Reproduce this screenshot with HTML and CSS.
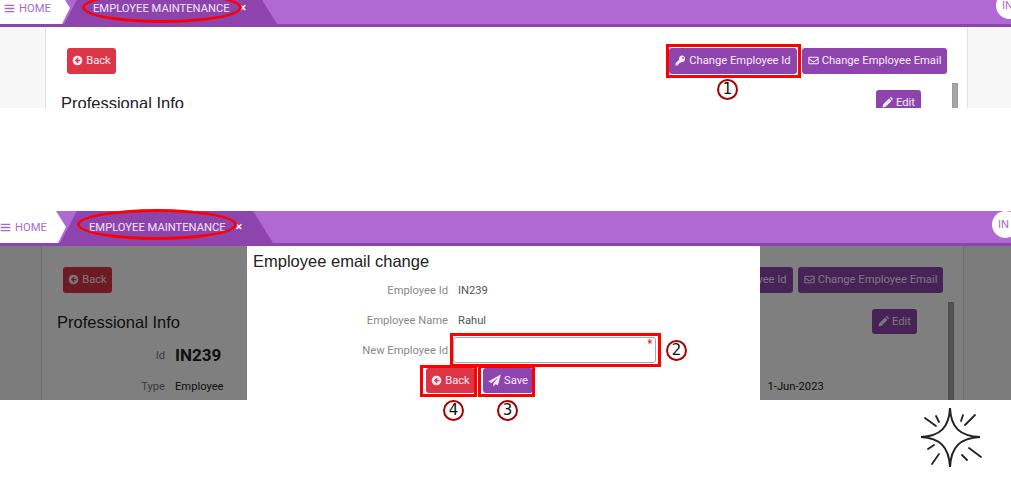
FILE: index.html
```html
<!DOCTYPE html>
<html lang="en">
<head>
    <meta charset="UTF-8">
    <title>Employee Maintenance</title>
    <link rel="stylesheet" href="styles.css">
</head>
<body>
    <svg class="defs" width="0" height="0">
        <symbol id="i-bars" viewBox="0 0 16 16"><path d="M1 2.5h14v2H1zM1 7h14v2H1zM1 11.5h14v2H1z"/></symbol>
        <symbol id="i-back" viewBox="0 0 16 16"><path fill-rule="evenodd" d="M8 1a7 7 0 1 0 0 14A7 7 0 0 0 8 1zM8.4 3.8l1.3 1.3-1.9 1.9H12.2v2H7.8l1.9 1.9-1.3 1.3L4.2 8z"/></symbol>
        <symbol id="i-key" viewBox="0 0 16 16"><path fill-rule="evenodd" d="M10.5.8a4.7 4.7 0 0 0-4.5 6L.8 12v3.2h3.4v-1.8H6v-1.8h1.8l1.4-1.4a4.7 4.7 0 1 0 1.3-9.4zM11.8 3a1.3 1.3 0 1 1 0 2.6 1.3 1.3 0 0 1 0-2.6z"/></symbol>
        <symbol id="i-mail" viewBox="0 0 16 16"><path fill-rule="evenodd" d="M2 2.5h12A1.5 1.5 0 0 1 15.500 4v8a1.500 1.500 0 0 1-1.500 1.500H2A1.500 1.500 0 0 1 .5 12V4A1.500 1.500 0 0 1 2 2.500zM2 4v1.200l6 4.300 6-4.300V4zM14 7l-6 4.300L2 7v5h12z"/></symbol>
        <symbol id="i-edit" viewBox="0 0 16 16"><path d="M.8 15.200l1-4.500 8.500-8.500 3.500 3.500-8.500 8.500zM11.300 1.200l1-.8c.4-.3.9-.3 1.300 0l2 2c.3.4.3.9 0 1.300l-.8 1z"/></symbol>
        <symbol id="i-send" viewBox="0 0 16 16"><path d="M15.700.5L.3 9.300l4.200 1.700 8.500-7.300-6.600 8.200v3.600l2.500-3 3.300 1.400z"/></symbol>
    </svg>

    <div class="canvas">
        <section class="shot shot-top">
            <div class="page">
                <nav class="nav">
                    <div class="tab-home"><svg class="icon"><use href="#i-bars"/></svg> HOME</div>
                    <div class="tab-active">EMPLOYEE MAINTENANCE <span class="tab-close">&#10005;</span></div>
                    <div class="avatar">IN</div>
                </nav>
                <main class="main">
                    <div class="card">
                        <div class="actions">
                            <button class="btn btn-red btn-back"><svg class="icon"><use href="#i-back"/></svg> Back</button>
                            <div class="actions-right">
                                <button class="btn btn-purple btn-id"><svg class="icon"><use href="#i-key"/></svg> Change Employee Id</button>
                                <button class="btn btn-purple btn-email"><svg class="icon"><use href="#i-mail"/></svg> Change Employee Email</button>
                            </div>
                        </div>
                        <div class="info-head">
                            <h2>Professional Info</h2>
                            <button class="btn btn-purple btn-edit"><svg class="icon"><use href="#i-edit"/></svg> Edit</button>
                        </div>
                        <div class="thumb"></div>
                    </div>
                </main>
            </div>
        </section>

        <section class="shot shot-bottom">
            <div class="page">
                <nav class="nav">
                    <div class="tab-home"><svg class="icon"><use href="#i-bars"/></svg> HOME</div>
                    <div class="tab-active">EMPLOYEE MAINTENANCE <span class="tab-close">&#10005;</span></div>
                    <div class="avatar">IN</div>
                </nav>
                <main class="main">
                    <div class="card">
                        <div class="actions">
                            <button class="btn btn-red btn-back"><svg class="icon"><use href="#i-back"/></svg> Back</button>
                            <div class="actions-right">
                                <button class="btn btn-purple btn-id"><svg class="icon"><use href="#i-key"/></svg> Change Employee Id</button>
                                <button class="btn btn-purple btn-email"><svg class="icon"><use href="#i-mail"/></svg> Change Employee Email</button>
                            </div>
                        </div>
                        <div class="info-head">
                            <h2>Professional Info</h2>
                            <button class="btn btn-purple btn-edit"><svg class="icon"><use href="#i-edit"/></svg> Edit</button>
                        </div>
                        <div class="info-id"><span class="info-label">Id</span><strong>IN239</strong></div>
                        <div class="info-type"><span class="info-label">Type</span><span>Employee</span><span class="info-date">1-Jun-2023</span></div>
                        <div class="thumb"></div>
                    </div>
                    <div class="dim"></div>
                    <div class="modal">
                        <h3>Employee email change</h3>
                        <div class="form-row"><label>Employee Id</label><span class="form-value">IN239</span></div>
                        <div class="form-row"><label>Employee Name</label><span class="form-value">Rahul</span></div>
                        <div class="form-row"><label>New Employee Id</label><div class="input"><span class="required">*</span></div></div>
                        <div class="modal-btns">
                            <button class="btn btn-red btn-back"><svg class="icon"><use href="#i-back"/></svg> Back</button>
                            <button class="btn btn-purple btn-save"><svg class="icon"><use href="#i-send"/></svg> Save</button>
                        </div>
                    </div>
                </main>
            </div>
        </section>

        <!-- annotations drawn on top of the screenshots -->
        <div class="ring ring-a"></div>
        <div class="ring ring-b"></div>
        <div class="box box-id"></div>
        <div class="box box-input"></div>
        <div class="box box-back"></div>
        <div class="box box-save"></div>
        <div class="num num-1">1</div>
        <div class="num num-2">2</div>
        <div class="num num-3">3</div>
        <div class="num num-4">4</div>

        <svg class="sparkle" viewBox="0 0 100 83" width="100" height="83">
            <path class="sparkle-star" d="M50 13C51 33 60 41 80 42C60 43 51 52 50 72C49 52 40 43 21 42C40 41 49 33 50 13Z"/>
            <path class="sparkle-ticks" d="M25 23L36 31M36 21L39 27M61 26L63 20M65 30L75 20M69 53L81 62M62 60L67 65M28 54L34 50M32 69L39 59"/>
        </svg>
    </div>
</body>
</html>
```

FILE: styles.css
```css
html, body {
    margin: 0;
    background-color: #fff;
}

.defs {
    position: absolute;
}

.canvas {
    position: relative;
    width: 1011px;
    height: 478px;
    overflow: hidden;
    font-family: 'Roboto', sans-serif;
    font-size: 11.2px;
}

.shot {
    overflow: hidden;
}

.shot-top {
    height: 108px;
    margin-bottom: 103px;
}

.shot-top .page {
    margin-top: -8px;
}

.shot-bottom {
    height: 189px;
}

.shot-bottom .page {
    margin-left: -4px;
}

.page {
    width: 1015px;
}

/* nav */
.nav {
    display: flex;
    height: 32px;
    background-color: #b068d3;
    border-bottom: 3px solid #8e44ad;
}

.tab-home {
    width: 70px;
    padding-left: 4px;
    box-sizing: border-box;
    display: flex;
    align-items: center;
    gap: 4px;
    background-color: #fff;
    color: #a66bc6;
    clip-path: polygon(0 0, 60px 0, 70px 50%, 62px 100%, 0 100%);
}

.tab-active {
    width: 213px;
    margin-left: -6px;
    padding-left: 29px;
    box-sizing: border-box;
    display: flex;
    align-items: center;
    gap: 9px;
    background-color: #8e44ad;
    color: #f1e4f7;
    white-space: nowrap;
    clip-path: polygon(0 100%, 17px 0, 193px 0, 213px 100%);
}

.tab-close {
    font-size: 9px;
    font-weight: bold;
    color: #fff;
}

.avatar {
    width: 27px;
    height: 27px;
    margin-left: auto;
    margin-right: -8px;
    padding-left: 6px;
    box-sizing: border-box;
    line-height: 27px;
    border-radius: 50%;
    background-color: #fff;
    color: #a66bc6;
}

/* content */
.main {
    position: relative;
    height: 160px;
    background-color: #f7f7f7;
    padding: 0 47px 0 45px;
}

.card {
    position: relative;
    height: 100%;
    padding: 21px 20px 0 21px;
    box-sizing: border-box;
    background-color: #fff;
    border-left: 1px solid #dee2e6;
    border-right: 1px solid #dee2e6;
    color: #333;
}

.actions {
    display: flex;
    justify-content: space-between;
}

.actions-right {
    display: flex;
    gap: 5px;
}

.btn {
    height: 26px;
    padding: 0 0 1px;
    display: inline-flex;
    align-items: center;
    justify-content: center;
    gap: 3px;
    border: 1px solid transparent;
    border-radius: 3px;
    color: #f6ecfa;
    font-family: inherit;
    font-size: 11.2px;
    white-space: nowrap;
}

.btn-red {
    background-color: #dc3545;
}

.btn-purple {
    background-color: #8e44ad;
}

.btn-back {
    width: 49px;
}

.btn-id {
    width: 128px;
}

.btn-email {
    width: 145px;
}

.btn-edit {
    width: 45px;
    height: 25px;
}

.btn-save {
    width: 50px;
}

.icon {
    width: 11px;
    height: 11px;
    fill: currentColor;
    flex: none;
}

.btn-save .icon {
    width: 13px;
    height: 13px;
}

.info-head {
    display: flex;
    justify-content: space-between;
    align-items: flex-start;
    height: 24px;
    margin: 16px 26px 0 -6px;
}

.info-head h2 {
    margin: 0;
    padding-top: 4px;
    font-family: 'Liberation Sans', sans-serif;
    font-size: 16.500px;
    font-weight: normal;
    color: #222;
}

.info-id, .info-type {
    display: flex;
    align-items: center;
    margin-left: -21px;
}

.info-id {
    height: 32px;
    margin-top: 6px;
    font-size: 17px;
}

.info-id strong {
    color: #222;
}

.info-type {
    margin-top: 9px;
    color: #222;
}

.info-label {
    width: 123px;
    margin-right: 10px;
    text-align: right;
    font-size: 11.2px;
    color: #777;
}

.info-date {
    margin-left: 544px;
}

.thumb {
    position: absolute;
    top: 56px;
    left: 906px;
    width: 6px;
    height: 110px;
    background-color: #a6a6a6;
    border: 1px solid #999;
    box-sizing: border-box;
}

/* modal */
.dim {
    position: absolute;
    inset: 0;
    background-color: rgba(0, 0, 0, 0.5);
}

.modal {
    position: absolute;
    top: 0;
    bottom: 0;
    left: 251px;
    width: 513px;
    padding-left: 6px;
    box-sizing: border-box;
    background-color: #fff;
}

.modal h3 {
    margin: 0;
    height: 29px;
    line-height: 30px;
    font-family: 'Liberation Sans', sans-serif;
    font-size: 16.500px;
    font-weight: normal;
    color: #222;
}

.form-row {
    display: flex;
    align-items: center;
    height: 30px;
}

.form-row label {
    width: 195px;
    text-align: right;
    color: #888;
}

.form-value {
    margin-left: 10px;
    color: #555;
}

.input {
    position: relative;
    width: 203px;
    height: 26px;
    margin-left: 5px;
    box-sizing: border-box;
    border: 1px solid #aaa;
    border-radius: 3px;
}

.required {
    position: absolute;
    top: 1px;
    right: 3px;
    color: #f00;
    font-size: 10px;
    font-weight: bold;
    line-height: 10px;
}

.modal-btns {
    display: flex;
    gap: 8px;
    margin: 3px 0 0 173px;
}

.modal-btns .btn {
    height: 25px;
}

/* annotations */
.ring, .box, .num {
    position: absolute;
    box-sizing: border-box;
}

.ring {
    border: 3px solid #f00;
    border-radius: 50%;
    width: 160px;
    height: 31px;
}

.ring-a {
    left: 82px;
    top: -8px;
}

.ring-b {
    left: 77px;
    top: 209px;
}

.box {
    border: 3px solid #f00;
}

.box-id {
    left: 666px;
    top: 44px;
    width: 135px;
    height: 34px;
}

.box-input {
    left: 450px;
    top: 333px;
    width: 211px;
    height: 34px;
}

.box-back {
    left: 420px;
    top: 365px;
    width: 57px;
    height: 32px;
}

.box-save {
    left: 478px;
    top: 365px;
    width: 57px;
    height: 32px;
}

.num {
    width: 21px;
    height: 21px;
    border: 2px solid #a80000;
    border-radius: 50%;
    background-color: #fff;
    font-family: 'DejaVu Sans', sans-serif;
    font-size: 15px;
    line-height: 17px;
    text-align: center;
    color: #111;
}

.num-1 { left: 717px; top: 79px; }
.num-2 { left: 666px; top: 340px; }
.num-3 { left: 497px; top: 400px; }
.num-4 { left: 443px; top: 400px; }

.sparkle {
    position: absolute;
    left: 900px;
    top: 395px;
}

.sparkle-star {
    fill: #fff;
    stroke: #222;
    stroke-width: 2;
}

.sparkle-ticks {
    fill: none;
    stroke: #222;
    stroke-width: 1.800;
    stroke-linecap: round;
}
```
